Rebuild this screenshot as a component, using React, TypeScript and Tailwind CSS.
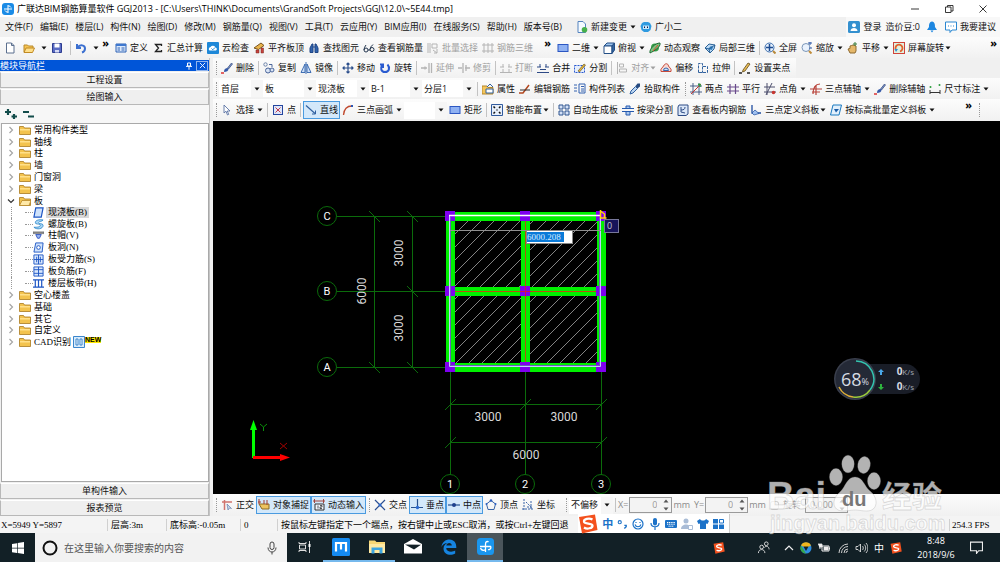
import type { ReactNode } from "react";
import { clsx } from "clsx";

/* 工具栏图标,统一 12x12 画布 */
const icons: Record<string, ReactNode> = {
  newFile: <path d="M2.500 1h5l2.500 2.500V11h-7.500zM7.500 1v2.500H10" fill="#fff" stroke="#5b6f8e" />,
  open: <><path d="M1 10V3h3.500l1 1H10v2" fill="#f6c453" stroke="#b98a2d" /><path d="M1 10.500 3 6h8.500L9.500 10.500z" fill="#ffdf8a" stroke="#c08a24" /></>,
  save: <><path d="M1.500 1.500h9v9h-9z" fill="#5a6cc4" stroke="#2d3c90" /><path d="M3.500 1.500h5v4h-5z" fill="#fff" /><path d="M4 8h4v2.500H4z" fill="#d5daf5" /></>,
  undo: <path d="M2 2v4h4M2.500 5.500C5 2 10 3 10 6.500 10 9 8.500 10 7 10.500" fill="none" stroke="#3b6fd0" strokeWidth="2" />,
  define: <><path d="M1 2h10v8H1z" fill="#dce9fb" stroke="#2f62b5" /><path d="M1 2h10v2H1z" fill="#3f78cf" /><path d="M2.500 6H5M6.500 6h3M2.500 8H5M6.500 8h3" stroke="#2f62b5" /></>,
  sum: <path d="M9.500 4V2.500h-6L6.500 6l-3 3.500h6V8" fill="none" stroke="#222" strokeWidth="1.300" />,
  cloud: <><rect width="12" height="12" rx="1" fill="#1e88d8" /><path d="M2.500 8.500a2 2 0 0 1 1-3.500 2.800 2.800 0 0 1 5 .5 1.600 1.600 0 0 1 .5 3z" fill="#fff" /><path d="m4.500 6.500 1.300 1.300L8 5.500" fill="none" stroke="#1e88d8" /></>,
  roof: <><path d="M1 6 8 1l3 2.500-5.500 4z" fill="#e9b44c" stroke="#7b5520" /><path d="M3 8v3h3V8zM8 6h2.500v5H8z" fill="#c7423d" stroke="#7b2a20" strokeWidth=".5" /></>,
  find: <path d="M2 10.500V6l2-4h1v8.500zM7 10.500V2h1l2 4v4.500zM5 5h2" fill="#3163ad" stroke="#1f4585" />,
  glasses: <path d="M1 8a2 2 0 0 0 4 0 2 2 0 0 0-4 0 8 8 0 0 1 2-5M7 7.500a2 2 0 0 0 4 0 2 2 0 0 0-4 0 8 8 0 0 1 3-5M5 8h2" fill="none" stroke="#24364f" />,
  batch: <path d="M1 1v10M3 1v10M5 2h5v4H5zM6 8l4 3M10 7v4H7" fill="none" stroke="#b4b4b4" />,
  rebar3d: <path d="M2 1v10M6 1v10M10 1v10M0 3h12M0 9h12" fill="none" stroke="#b4b4b4" />,
  view2d: <rect x="1" y="2.500" width="10" height="7" fill="#8fb1f2" stroke="#2b56c2" />,
  cube: <><path d="M1 4 4 1h7.500L9 4z" fill="#9ec5ee" stroke="#244f86" /><path d="M1 4h8v7.500H1z" fill="#fff" stroke="#244f86" /><path d="m9 4 2.500-3v7L9 11.500z" fill="#33659f" stroke="#244f86" /></>,
  orbit: <><circle cx="6" cy="5.500" r="4" fill="#35a047" /><path d="M1 11C0 7 6 1 11 1c1 4-6 8-10 10z" fill="#7ac37e" stroke="#1f6b35" /><path d="M4 9 9 3" stroke="#d94b31" /></>,
  local3d: <><path d="m1 6 4-4 6 1-1 4-4 4z" fill="#bcd9f4" stroke="#2a6297" /><path d="m4 7 3-3 2 1-1 3z" fill="#2f7fc0" /><path d="m1 6 4 1 1 4M5 7l6-4" fill="none" stroke="#2a6297" /></>,
  full: <><circle cx="5.500" cy="5.500" r="4.500" fill="#e4effc" stroke="#3e6fae" /><path d="M5.500 2v7M2 5.500h7" stroke="#1d4c91" strokeWidth="1.500" /><path d="m9 9 2.500 2.500" stroke="#b78a3b" strokeWidth="2" /></>,
  zoom: <><circle cx="5" cy="5.500" r="4" fill="#e9f2fd" stroke="#7c97b9" /><path d="M7 1h4M9 0v3M8 6h3" stroke="#2a57a5" /><path d="m8 9 2.500 2.500" stroke="#c08c3a" strokeWidth="2" /></>,
  pan: <><path d="M3 11 1 7l2-.5V4l1.500-.5L6 3l1.500.5L9 4v5l-1 2z" fill="#e5b86b" stroke="#8d6a31" /><path d="M8 0v4M6 2h4" stroke="#3b7d3a" /></>,
  rotateScreen: <><rect x=".5" y=".5" width="11" height="11" fill="#dff1df" stroke="#d0433a" /><path d="M3 8a3.500 3.500 0 1 1 4 1.500" fill="none" stroke="#e2622d" strokeWidth="1.800" /><path d="m1.500 7 3.500 0-2 3z" fill="#2e8fd6" /></>,
  brush: <><path d="m6.500 6 4-5 1 1-4 5z" fill="#7a93c7" stroke="#33497c" strokeWidth=".7" /><path d="M3 10c0-3 1.500-4 3.500-4l1 1c0 2-2 3-4.500 3z" fill="#3559a8" /><path d="M0 11h3" stroke="#d33" strokeWidth="1.500" /></>,
  copy: <><circle cx="2.500" cy="2.500" r="1.700" fill="none" stroke="#6c83aa" /><circle cx="5" cy="8.500" r="2.500" fill="#d9e4f5" stroke="#4a659a" /><circle cx="9" cy="8" r="2" fill="#d9e4f5" stroke="#4a659a" /><path d="M6 2.500h3V5" fill="none" stroke="#4a659a" /></>,
  mirror: <path d="M5 2v8.500H1zM7 2v8.500h4zM6 0v12" fill="#cfe0f7" stroke="#2f62ad" strokeWidth=".9" />,
  move: <path d="M6 1v10M1 6h10M4.500 2.500 6 1l1.500 1.500M4.500 9.500 6 11l1.500-1.500M2.500 4.500 1 6l1.500 1.500M9.500 4.500 11 6 9.500 7.500" fill="none" stroke="#2c4f8c" strokeWidth="1.200" />,
  rotate: <path d="M1 2.500h3V6M3.500 3C1 6 2 10 6 10s5.500-4 2.500-7.500" fill="none" stroke="#2a5bd0" strokeWidth="2" />,
  extend: <path d="M0 6h6M4 4.500V7.500M8 1v10M10.500 1v10" fill="none" stroke="#b4b4b4" strokeWidth="1.300" />,
  trim: <path d="M0 6h4M5 1v10M7 6h5M8 3v6" fill="none" stroke="#b4b4b4" strokeWidth="1.300" />,
  breakLine: <path d="M0 10.500h12M0 5h4M8 5h4M3 2v3M9 2v3M3 7v3M9 7v3" fill="none" stroke="#b4b4b4" />,
  join: <path d="M0 10.500h12M0 5h4M8 5h4M3 2v3M9 2v3M3 7.500h6" fill="none" stroke="#2d4a86" />,
  split: <><rect x=".5" y="3.500" width="10" height="7" fill="#e5eefc" stroke="#2b5bd0" strokeDasharray="2 1" /><path d="m4 9 6-7 1.500 1-6 7z" fill="#e8b93c" stroke="#5a4616" strokeWidth=".6" /></>,
  align: <path d="M1.500 0v12M3.500 2h4v3h-4zM3.500 7h7v3h-7z" fill="none" stroke="#b4b4b4" />,
  offset: <><path d="M1 9.500c-1-3 2-4 2.500-5.500C5 1 8 1 8.500 4c.5 1.500 3.500 2.500 2.500 5.500z" fill="#f7d9d4" stroke="#c64a3c" /><path d="M3.500 8.500a2.500 2.500 0 1 1 5 0z" fill="#d4e3f8" stroke="#3768ae" /></>,
  stretch: <path d="M1.500 10.500v-9h4v9zM6 4.500h4.500v6H2" fill="none" stroke="#33639f" strokeDasharray="3 1" />,
  grip: <><path d="m4 8 5-7 2 1-5 7-2.500 1z" fill="#e9bd57" stroke="#5e4818" strokeWidth=".8" /><path d="M0 11h3M8 11h3" stroke="#222" strokeWidth="1.500" /></>,
  property: <><path d="M0 3h5l1 1.500h5V11H0z" fill="#f5c65b" stroke="#b5862b" /><path d="M4 6h7v4H4z" fill="#fff" stroke="#33639f" /><path d="m5 4 3-3 3 3" fill="none" stroke="#33639f" /></>,
  editRebar: <><path d="M0 10h4l6-8" fill="none" stroke="#b3471f" strokeWidth="1.500" /><path d="M1 7h10" stroke="#333" /></>,
  list: <path d="M0 2h3M0 5h3M0 8h3M5 1h6v9H5zM7 3.500h3M7 6h3M7 8h3" fill="none" stroke="#3562b0" />,
  picker: <><path d="m1 11 1-3 4.500-4.500 2 2L4 10z" fill="#bcd6f2" stroke="#2f5f9f" /><path d="m6.500 3 2-2.500h2.500v3L8.500 5.500z" fill="#264a80" /></>,
  axis2: <><path d="M3 0v12M9 0v12M0 3h12M0 9h12" stroke="#39507d" strokeWidth=".9" /><path d="M1 11 11 1" stroke="#c7362f" /><path d="M8 1.500h2V4" fill="none" stroke="#2b9b3e" strokeWidth="1.500" /></>,
  parallel: <path d="M3 1v10M8.500 1v10M0 4h12M0 8h12" stroke="#6a4b8c" strokeWidth="1.200" />,
  axisAngle: <><path d="M3 0v12M0 4h11M0 9h12M8 0 2 12" stroke="#4d4f6d" /><circle cx="9.500" cy="9.500" r="1.800" fill="#c7362f" /></>,
  axis3: <path d="M0 6h12M6 2v10M10 1C6 1 3 4 3 11M2 9h8" fill="none" stroke="#b8433a" strokeWidth="1.200" />,
  dim: <><path d="M1 7v4M11 7v4M1 9.500h10" stroke="#333" /><circle cx="1.500" cy="4" r="1" fill="#2a9c3b" /><circle cx="10.500" cy="2" r="1" fill="#2a9c3b" /></>,
  pointer: <path d="M3 1v8l2-1.800L6.500 11l1.200-.6L6.300 7H9z" fill="#fff" stroke="#5b74a5" strokeWidth=".9" />,
  point: <><rect x="1.500" y="1.500" width="9" height="9" fill="#dfe7fa" stroke="#24459e" /><path d="m3.500 3.500 5 5M8.500 3.500l-5 5" stroke="#c03a4b" /></>,
  line: <><path d="m1 1.500 9 8" stroke="#2f5f9f" strokeWidth="1.200" /><path d="M10.500 6.500V10H7" fill="none" stroke="#2f5f9f" /></>,
  arc: <><path d="M1.500 11C2 5 5 2 10 2" fill="none" stroke="#c0492e" strokeWidth="1.300" /><path d="M9 1h2v2H9z" fill="#2b57b5" /></>,
  smart: <><path d="M.5 .5h11v11H.5z" fill="#e7effb" stroke="#315b9e" /><path d="m2.500 2.500 1.500 1.500M9.500 2.500 8 4M2.500 9.500 4 8M9.500 9.500 8 8M5.500 6h1" stroke="#111" strokeWidth="1.500" /></>,
  autoSlab: <path d="M1 1h4v4H1zM7 1h4v4H7zM1 7h4v4H1zM7 7h4v4H7z" fill="#d4e1f7" stroke="#2f558f" />,
  splitBeam: <path d="M0 4.500h12M0 7.500h12M4 2h4v2.500H4zM4 7.500h4V11H4z" fill="#a9c7ee" stroke="#2459ae" />,
  viewRebar: <><path d="M2 1h9v9l-2 1.500H1V3z" fill="#dbe7f8" stroke="#2e4c86" /><path d="M4 3v5l4 1M4 6c3 0 4-1 4-3" fill="none" stroke="#2e4c86" /></>,
  slope3: <><path d="M2 1v8h9" fill="none" stroke="#1f4da0" strokeWidth="1.300" /><path d="m2 9 3-3 4 3.500-5 1.500z" fill="#9fc0ee" stroke="#1f4da0" strokeWidth=".7" /></>,
  slopeBatch: <><path d="M3 1h8.500L9 11H.5z" fill="#e2f0fc" stroke="#1b7ac0" /><path d="M4 5h5l-3 3.500z" fill="#1b5ea8" /></>,
  ortho: <><path d="M1 3h10M3.500 1v10" stroke="#d0746e" strokeWidth="1.500" /><path d="m6 5 1 6 1.500-2 2 .5z" fill="#c5d4ea" stroke="#6680ab" strokeWidth=".7" /></>,
  osnap: <><path d="M1 5h10v5H4z" fill="#edc35f" stroke="#8d6a22" /><path d="M1 0v5M6 1v4M0 3h3M9 1v5" stroke="#a33b31" /></>,
  dyn: <><path d="M0 2h12M1.500 0v4M10.500 0v4" stroke="#a3443c" /><path d="M2 5h9v6H2z" fill="#eef3fb" stroke="#333" /><path d="M5 6.500v3M7 6.500h2V8H7v1.500h2" fill="none" stroke="#333" strokeWidth=".8" /></>,
  cross: <><path d="m1 1 10 10M11 1 1 11" stroke="#2b4f93" strokeWidth="1.200" /><circle cx="6" cy="6" r="1.500" fill="#2b6ad0" /></>,
  perp: <><path d="M0 8.500h12M6.500 0v8.500" stroke="#27518f" strokeWidth="1.200" /><circle cx="6.500" cy="8.500" r="1.700" fill="#2b6ad0" /></>,
  mid: <><path d="M0 6h12" stroke="#27518f" strokeWidth="1.200" /><circle cx="6" cy="6" r="2" fill="#1e3f8c" /></>,
  vertex: <><path d="m6 1.500 4.500 3.500L9 10.500H3L1.500 5z" fill="none" stroke="#3b65a8" /><circle cx="6" cy="1.500" r="1.300" fill="#2b5fc0" /><circle cx="1.500" cy="5" r="1" fill="#2b5fc0" /><circle cx="10.500" cy="5" r="1" fill="#2b5fc0" /></>,
  coord: <path d="M2 0v12M0 10h12M4 3l5 5M9 2v8M5 8h6" fill="none" stroke="#3b65a8" strokeDasharray="2 1" />,
  change: <><path d="M2 .5h5l2.500 2.500v8.500H2z" fill="#f4faff" stroke="#5583bf" /><circle cx="8.500" cy="8.800" r="2.800" fill="#47b04b" /></>,
  mascot: <><path d="M2 2 4 1h4l2 1 1.500 3-1 4L8 11H4L1.500 9l-1-4z" fill="#2f9ae0" /><path d="M3 4.500h6v3.500H3z" fill="#c7e8fb" /><path d="M4.500 5.500v1.500M7.500 5.500v1.500" stroke="#114" /></>,
  login: <><rect width="12" height="12" rx="1.500" fill="#3490cf" /><circle cx="6" cy="4.300" r="2" fill="#fff" /><path d="M2.500 10c0-4 7-4 7 0z" fill="#fff" /></>,
  bell: <><path d="M6 .5C3 1 3 4 3 6L1 9h10L9 6c0-2 0-5-3-5.500z" fill="#1c86e0" /><path d="M4.500 9.500h3L6 11.500z" fill="#1c86e0" /></>,
  feedback: <><path d="M.5 1h11v8H7l-2 2.500V9H.5z" fill="#fff" stroke="#2b87d1" /><path d="M3 5h1M5.500 5h1M8 5h1" stroke="#2b87d1" strokeWidth="1.200" /></>,
};

function Icon({ name }: { name: string }) {
  return (
    <svg viewBox="0 0 12 12" className="w-3 h-3 shrink-0" aria-hidden="true">
      {icons[name]}
    </svg>
  );
}

function Arrow() {
  return (
    <svg viewBox="0 0 6 4" className="w-[6px] h-1 shrink-0" aria-hidden="true">
      <path d="M.5 .5h5L3 3.500z" fill="currentColor" />
    </svg>
  );
}

interface ToolProps {
  icon?: string;
  label?: string;
  menu?: boolean;
  snug?: boolean;
  off?: boolean;
  active?: boolean;
}

function Tool({ icon, label, menu, snug, off, active }: ToolProps) {
  return (
    <button
      type="button"
      disabled={off}
      aria-label={label ?? icon}
      className={clsx(
        "flex items-center shrink-0 h-[18px] px-[2px] gap-[3px] whitespace-nowrap",
        off ? "text-[#a0a0a0]" : "text-[#111]",
        active && "bg-[#d3e8fa] ring-1 ring-inset ring-[#4a9be0]"
      )}
    >
      {icon && <Icon name={icon} />}
      <span className="flex items-center">
        {label}
        {menu && <span className={snug ? "pl-px" : "pl-[3px]"}><Arrow /></span>}
      </span>
    </button>
  );
}

const Sep = () => <span className="w-px h-[14px] mx-[2px] bg-[#c3c3c3] shrink-0" />;
const Grip = () => <span className="w-0 h-[14px] ml-[3px] mr-[2px] border-l border-dotted border-[#999] shrink-0" />;
const More = () => <span className="self-start text-[11px] leading-[12px] font-bold text-black">»</span>;

function Combo({ value, label, className }: { value: string; label: string; className: string }) {
  return (
    <span className={clsx("relative flex items-center shrink-0 h-[17px] bg-white", className)}>
      <select aria-label={label} defaultValue={value} className="appearance-none w-full h-full pl-[2px] bg-transparent outline-none">
        <option>{value}</option>
      </select>
      <span className="absolute right-0 inset-y-0 w-[12px] flex items-center justify-center bg-[#f6f6f6] pointer-events-none">
        <Arrow />
      </span>
    </span>
  );
}

function NumberBox({ label, value, unit }: { label: string; value: string; unit?: string }) {
  return (
    <label className="flex items-center gap-px text-[#8a8a8a] shrink-0">
      {label}
      <span className="flex items-center w-[43px] h-4 border border-[#9a9a9a] bg-[#f3f3f3] text-[#999]">
        <input className="w-full min-w-0 text-right bg-transparent outline-none pr-1" defaultValue={value} />
        <span className="flex flex-col gap-1 px-[2px] text-[#555]">
          <span className="rotate-180 flex"><Arrow /></span>
          <Arrow />
        </span>
      </span>
      {unit}
    </label>
  );
}

const menus = ["文件(F)", "编辑(E)", "楼层(L)", "构件(N)", "绘图(D)", "修改(M)", "钢筋量(Q)", "视图(V)", "工具(T)", "云应用(Y)", "BIM应用(I)", "在线服务(S)", "帮助(H)", "版本号(B)"];

interface TreeRow {
  name: string;
  open?: boolean;
  child?: string;
}

const tree: TreeRow[] = [
  { name: "常用构件类型" },
  { name: "轴线" },
  { name: "柱" },
  { name: "墙" },
  { name: "门窗洞" },
  { name: "梁" },
  { name: "板", open: true },
  { name: "现浇板(B)", child: "slab" },
  { name: "螺旋板(B)", child: "spiral" },
  { name: "柱帽(V)", child: "cap" },
  { name: "板洞(N)", child: "hole" },
  { name: "板受力筋(S)", child: "rebar" },
  { name: "板负筋(F)", child: "negative" },
  { name: "楼层板带(H)", child: "strip" },
  { name: "空心楼盖" },
  { name: "基础" },
  { name: "其它" },
  { name: "自定义" },
  { name: "CAD识别" },
];

const treeIcons: Record<string, ReactNode> = {
  slab: <path d="M3 1h8L9 11H1z" fill="#cfe2fb" stroke="#1d55c4" strokeWidth="1.300" />,
  spiral: <path d="M11 1C6 0 1 2 3 5c2 1 5 0 5 2S4 9 1 9c3 3 10 2 10-2 0-3-5-1-5-3 1-2 4-1 5-3z" fill="#a9d7f5" stroke="#1b7cc4" strokeWidth=".8" />,
  cap: <><path d="M0 2h12v2H0z" fill="#8c8c8c" stroke="#555" strokeWidth=".5" /><path d="M3 5h6L7 9H5z" fill="#9db8f0" stroke="#2a4fc0" /></>,
  hole: <><path d="M3 1h8l-1 10H1z" fill="#cfe2fb" stroke="#1d55c4" /><circle cx="6" cy="6" r="2" fill="#fff" stroke="#1d55c4" /></>,
  rebar: <path d="M1 1h10v10H1zM1 6h10M4 3v6M8 3v6M6 1v10" fill="#d9e8fd" stroke="#1d55c4" />,
  negative: <path d="M1 1h10v10H1zM1 4h10M1 8h10M6 1v10" fill="#d9e8fd" stroke="#1d55c4" />,
  strip: <path d="M0 2h12M0 10h12M2.500 2v8M6 2v8M9.500 2v8" fill="none" stroke="#1d55c4" strokeWidth="1.300" />,
};

function TreeItem({ row }: { row: TreeRow }) {
  if (row.child) {
    return (
      <li className="flex items-center pl-[9px]">
        <span className="w-[14px] h-full border-l border-dotted border-[#999]" />
        <span className="w-2 border-t border-dotted border-[#999]" />
        <svg viewBox="0 0 12 12" className="w-[11px] h-[11px] mr-[2px]" aria-hidden="true">{treeIcons[row.child]}</svg>
        <span className={clsx("px-[2px] leading-[11px]", row.child === "slab" && "bg-[#d9d9d9]")}>{row.name}</span>
      </li>
    );
  }
  return (
    <li className="flex items-center pl-[5px]">
      <svg viewBox="0 0 8 8" className="w-2 h-2 mr-1" aria-hidden="true">
        <path d={row.open ? "m1 2.500 3 3 3-3" : "m2.500 1 3 3-3 3"} fill="none" stroke={row.open ? "#333" : "#a5a5a5"} strokeWidth="1.200" />
      </svg>
      <svg viewBox="0 0 12 10" className="w-3 h-[10px] mr-[3px]" aria-hidden="true">
        <path d="M.5 9.500V1.500h4l1 1.500h6v6.500z" fill="#f3c34e" stroke="#a87a20" strokeWidth=".8" />
        {row.open ? (
          <path d="m.5 9.500 2.500-5h9l-2 5z" fill="#ffe9a8" stroke="#b8892b" strokeWidth=".8" />
        ) : (
          <path d="M1 4h10v1.500H1z" fill="#ffe08a" />
        )}
      </svg>
      {row.name}
      {row.name === "CAD识别" && (
        <>
          <svg viewBox="0 0 12 12" className="w-3 h-3 ml-[2px]" aria-hidden="true">
            <path d="M.5 .5h11v11H.5z" fill="#d7ebfc" stroke="#3b86cc" />
            <path d="M3 3h2v6H3zM7 3h2v6H7z" fill="#fff" stroke="#3b86cc" />
          </svg>
          <span className="bg-[#ffe800] font-bold font-['Liberation_Sans',sans-serif] text-[7px] leading-[6px] mb-[5px]">NEW</span>
        </>
      )}
    </li>
  );
}

function SidePanel() {
  const bar = "h-4 mt-px shrink-0 border border-[#b8b8b8] border-t-white bg-[#efefef] text-center leading-[14px]";
  return (
    <aside className="w-[210px] mr-[3px] shrink-0 flex flex-col bg-[#f0f0f0] border-r border-[#c4c4c4] pt-[2px]">
      <div className="h-[11px] shrink-0 flex items-center bg-[#0055d8] text-white">
        模块导航栏
        <svg viewBox="0 0 8 10" className="w-[6px] h-2 ml-auto mr-1" aria-hidden="true">
          <path d="M2 1h4v4H2zM0 5.500h8M4 5.500V10" fill="none" stroke="#fff" strokeWidth="1.300" />
        </svg>
        <button type="button" aria-label="关闭" className="w-3 h-[10px] mr-px border border-[#8fb4ee] flex items-center justify-center">
          <svg viewBox="0 0 8 8" className="w-[7px] h-[7px]"><path d="m1 1 6 6M7 1 1 7" stroke="#fff" /></svg>
        </button>
      </div>
      <button type="button" className={bar}>工程设置</button>
      <button type="button" className={bar}>绘图输入</button>
      <div className="h-[18px] shrink-0 flex items-center pl-1 gap-1 bg-[#f7f7f7]">
        <svg viewBox="0 0 14 12" className="w-[14px] h-3" aria-hidden="true">
          <path d="M4 1v6M1 4h6M10 6v5M7.500 8.500h5.500" stroke="#134d4b" strokeWidth="2.200" />
        </svg>
        <svg viewBox="0 0 14 12" className="w-[14px] h-3" aria-hidden="true">
          <path d="M1 4h6M6 8.500h6" stroke="#134d4b" strokeWidth="2" />
        </svg>
      </div>
      <div className="flex-1 min-h-0 bg-white border border-[#a9a9a9] ml-px">
        <ul className="grid auto-rows-fr h-[224px] font-['Liberation_Serif','Noto_Sans_CJK_SC',serif] text-black">
          {tree.map((row) => (
            <TreeItem key={row.name} row={row} />
          ))}
        </ul>
      </div>
      <button type="button" className={bar}>单构件输入</button>
      <button type="button" className={bar}>报表预览</button>
    </aside>
  );
}

const xs = [450, 525, 601];
const ys = [216, 291, 367];

function Drawing() {
  return (
    <svg viewBox="213 121 787 373" className="w-full h-full" role="img" aria-label="板绘图区">
      <defs>
        <pattern id="hatch" width="13" height="13" patternUnits="userSpaceOnUse">
          <path d="M-1 14 14 -1" stroke="#a4a4a4" strokeWidth=".8" />
        </pattern>
      </defs>
      <rect x="452" y="218" width="147" height="147" fill="url(#hatch)" />

      {/* 轴网 */}
      <g stroke="#0b6b0b" fill="none" shapeRendering="crispEdges">
        {ys.map((y) => (
          <path key={y} d={`M337 ${y}.5H450`} />
        ))}
        {xs.map((x) => (
          <path key={x} d={`M${x}.5 371V475`} />
        ))}
        <path d="M374.500 216V367M412.500 216V367M450 404.500H601M450 442.500H601" />
      </g>
      <g stroke="#0b6b0b" fill="none">
        {[[374, 216], [374, 367], [412, 216], [412, 291], [412, 367]].map(([x, y]) => (
          <path key={`${x}-${y}`} d={`m${x - 5} ${y - 5} 11 11`} />
        ))}
        {[[450, 404], [525, 404], [601, 404], [450, 442], [601, 442]].map(([x, y]) => (
          <path key={`${x}-${y}`} d={`m${x - 5} ${y + 6} 11 -11`} />
        ))}
        {ys.map((y) => (
          <circle key={y} cx="327" cy={y} r="9.500" />
        ))}
        {xs.map((x) => (
          <circle key={x} cx={x} cy="484" r="9.500" />
        ))}
      </g>

      {/* 梁与柱 */}
      <g fill="#00f000" shapeRendering="crispEdges">
        {ys.map((y) => (
          <rect key={y} x="446" y={y - 4} width="159" height="9" />
        ))}
        {xs.map((x) => (
          <rect key={x} x={x - 4} y="212" width="9" height="159" />
        ))}
      </g>
      <path d="M450 291.500H601M525.500 216V367" stroke="#b8500c" fill="none" shapeRendering="crispEdges" />
      <g fill="#7f00f0" shapeRendering="crispEdges">
        {xs.map((x) => ys.map((y) => <rect key={`${x}-${y}`} x={x - 5} y={y - 5} width="10" height="10" />))}
      </g>
      <path d="M520 291.500h11M525.500 286v11" stroke="#d01050" shapeRendering="crispEdges" />
      <path d="M450.500 217V365.500H599.500V218" stroke="#6a5fb8" fill="none" />
      <path d="M449.500 215.500V366.500H600.500V215.500" stroke="#c3ccff" fill="none" />
      <path d="M449 215.500H601" stroke="#fff" strokeWidth="1.500" />
      <path d="M450 230.500H601" stroke="#8f8f8f" />
      <path d="M600.500 210v8h6M600.500 211l4 3v4" stroke="#ffd800" strokeWidth="1.500" fill="none" />

      <g fill="#d8d8d8" fontFamily="Roboto, sans-serif" textAnchor="middle">
        <g fontSize="12">
          <text x="488" y="421">3000</text>
          <text x="564" y="421">3000</text>
          <text x="526" y="459">6000</text>
          <text transform="translate(403 253) rotate(-90)">3000</text>
          <text transform="translate(403 328) rotate(-90)">3000</text>
          <text transform="translate(366 291) rotate(-90)">6000</text>
        </g>
        <g fontSize="11" fill="#fff">
          <text x="327" y="220">C</text>
          <text x="327" y="295">B</text>
          <text x="327" y="371">A</text>
          <text x="450" y="488">1</text>
          <text x="525" y="488">2</text>
          <text x="601" y="488">3</text>
        </g>
      </g>

      {/* 坐标系 */}
      <path d="M253.500 458V428" stroke="#0f0" strokeWidth="3" />
      <path d="m250 430 3.500-10 3.500 10z" fill="#0f0" />
      <path d="M253 457.500H282" stroke="#f00" strokeWidth="3" />
      <path d="m280 454 10 3.500-10 3.500z" fill="#f00" />
      <path d="m260 424 3.500 3 3.500-3M263.500 427v4" stroke="#0a900a" fill="none" />
      <path d="m280 443 7 6M287 443l-7 6" stroke="#a00000" />
    </svg>
  );
}

function SpeedBall() {
  return (
    <div className="absolute left-[621px] top-[237px] w-[86px] h-[42px] text-[#d5dae2]">
      <div className="absolute left-5 top-[6px] right-0 h-[30px] rounded-r-full bg-[#191d27] pl-[24px] pr-[6px] flex flex-col justify-between text-[9px] leading-[15px]">
        {["#4aa8e8", "#2eb43e"].map((color, i) => (
          <div key={color} className="flex items-center justify-between">
            <svg viewBox="0 0 6 6" className="w-[6px] h-[6px]" aria-hidden="true">
              <path d={i === 0 ? "M3 0 6 3H4v3H2V3H0z" : "M3 6 0 3h2V0h2v3h2z"} fill={color} />
            </svg>
            <span><b className="text-[10px]">0</b><span className="text-[8px] text-[#a0a6b0]">K/s</span></span>
          </div>
        ))}
      </div>
      <svg viewBox="0 0 42 42" className="absolute left-0 top-0 w-[42px] h-[42px]" aria-hidden="true">
        <circle cx="21" cy="21" r="21" fill="#3a3f4d" />
        <circle cx="21" cy="21" r="19.500" fill="#242936" />
        <path d="M22 3a18 18 0 0 1 14 29" fill="none" stroke="#34c4b0" strokeWidth="1.500" />
        <path d="M36 32A18 18 0 0 1 19 39" fill="none" stroke="#9ccc3c" strokeWidth="1.500" />
        <path d="M19 39A18 18 0 0 1 5 29" fill="none" stroke="#e0b038" strokeWidth="1.500" />
      </svg>
      <span className="absolute left-0 top-0 w-[42px] h-[42px] flex items-center justify-center text-[18px] font-['Open_Sans',sans-serif]">
        68<span className="text-[9px] pt-[5px]">%</span>
      </span>
    </div>
  );
}

function Sogou({ className }: { className: string }) {
  return (
    <svg viewBox="0 0 20 20" className={className} aria-hidden="true">
      <path d="m1 3 16-2.500 2.500 15.500L4 19.500z" fill="#f4511e" />
      <path d="M14.500 5.500C11 3.500 5.500 5 6 7.800c.5 2.700 8 1 8.500 3.700.3 2.800-5.500 4-8.500 2" fill="none" stroke="#fff" strokeWidth="2.200" />
    </svg>
  );
}

function ImeBar() {
  return (
    <div className="absolute left-[578px] -top-[2px] h-[19px] w-[152px] flex items-center justify-between pr-1 bg-white border-r border-[#ccc] text-[#1c72c8]">
      <Sogou className="w-5 h-5" />
      <b className="text-[11px]">中</b>
      <svg viewBox="0 0 12 12" className="w-[11px] h-3"><circle cx="3" cy="4" r="1.700" fill="none" stroke="currentColor" strokeWidth="1.200" /><path d="M8 7.500h2V9l-2 2" fill="none" stroke="currentColor" strokeWidth="1.500" /></svg>
      <svg viewBox="0 0 12 12" className="w-3 h-3"><circle cx="6" cy="6" r="5" fill="none" stroke="currentColor" strokeWidth="1.200" /><path d="M3 6.500c1 3 5 3 6 0M4 4v1M8 4v1" fill="none" stroke="currentColor" strokeWidth="1.200" /></svg>
      <svg viewBox="0 0 12 12" className="w-3 h-3"><rect x="4" y="0" width="4" height="7.500" rx="2" fill="currentColor" /><path d="M2 5c0 5 8 5 8 0M6 9v3" fill="none" stroke="currentColor" strokeWidth="1.200" /></svg>
      <svg viewBox="0 0 12 12" className="w-3 h-3"><rect y="2" width="12" height="8" rx="1" fill="currentColor" /><path d="M2 4.500h8M2 6.200h8M3.500 8.200h5" stroke="#fff" strokeDasharray="1.200 .6" /></svg>
      <svg viewBox="0 0 12 12" className="w-3 h-3 text-[#a9bcd6]"><circle cx="5" cy="3" r="2.500" fill="currentColor" /><path d="M0 11c0-6 10-6 10 0z" fill="currentColor" /><path d="M7.500 7.500h4v4h-4z" fill="#fff" stroke="currentColor" /></svg>
      <svg viewBox="0 0 12 12" className="w-3 h-3"><path d="m0 3 3-2c1 2 5 2 6 0l3 2-1.500 3L9 5.500V11H3V5.500L1.500 6z" fill="currentColor" /></svg>
      <svg viewBox="0 0 12 12" className="w-3 h-3"><path d="M0 1h5v4.500H0zM0 6.500h5V11H0zM6 6.500h5V11H6z" fill="currentColor" /><path d="M6.500 1.500h4v3.500h-4z" fill="none" stroke="currentColor" /></svg>
    </div>
  );
}

function Watermark() {
  return (
    <svg viewBox="0 0 184 92" className="absolute right-[50px] bottom-[20px] w-[184px] h-[92px] pointer-events-none" aria-hidden="true">
      <g fill="#fff" fillOpacity=".7" stroke="#999" strokeOpacity=".35" strokeWidth=".8" fontFamily="'Liberation Sans', 'Noto Sans CJK SC', sans-serif">
        <ellipse cx="70" cy="27" rx="6.500" ry="8.500" />
        <ellipse cx="82" cy="14" rx="6.200" ry="8.800" />
        <ellipse cx="98" cy="15" rx="6.200" ry="8.500" transform="rotate(10 98 15)" />
        <ellipse cx="108" cy="31" rx="6.500" ry="8.500" />
        <path d="M89 27c8 0 9 9 15 14 9 7 8 20-3 20-6 0-8-1-12-1s-7 1-12 1c-11 0-12-12-3-19 6-6 7-15 15-15z" />
        <text x="1" y="59" fontSize="38" fontWeight="700">Bai</text>
        <text x="116" y="57" fontSize="30" fontWeight="700">经验</text>
        <text x="4" y="80" fontSize="20" fontWeight="700">jingyan.baidu.com</text>
      </g>
      <text x="76" y="56" fontSize="20" fontWeight="700" fill="#777" fontFamily="'Liberation Sans', sans-serif">du</text>
    </svg>
  );
}

function TitleBar() {
  return (
    <header className="h-[17px] shrink-0 flex items-center bg-white text-black">
      <svg viewBox="0 0 12 12" className="w-3 h-3 ml-[2px] mr-[3px]" aria-hidden="true">
        <rect width="12" height="12" rx="3" fill="#1a8be6" />
        <path d="M6 2v8M2 6h8M3 7.500C4 9.500 6 9 6 9M9 4.500C8 2.500 6 3 6 3" fill="none" stroke="#fff" />
      </svg>
      <h1>广联达BIM钢筋算量软件 GGJ2013 - [C:\Users\THINK\Documents\GrandSoft Projects\GGJ\12.0\~5E44.tmp]</h1>
      <div className="ml-auto flex">
        {[
          ["最小化", "M1 5h8"],
          ["还原", "M1.500 3h5.500v5.500H1.500zM3.500 3V1.500H9V7H7"],
          ["关闭", "m1.500 1.500 7 7M8.500 1.500l-7 7"],
        ].map(([label, d]) => (
          <button key={label} type="button" aria-label={label} className="w-[34px] h-[17px] flex items-center justify-center">
            <svg viewBox="0 0 10 10" className="w-[10px] h-[10px]"><path d={d} fill="none" stroke="#222" strokeWidth=".9" /></svg>
          </button>
        ))}
      </div>
    </header>
  );
}

function Taskbar() {
  const app = "w-9 h-full flex items-center justify-center border-b-2";
  return (
    <footer className="h-[29px] shrink-0 flex items-center bg-[#122026] text-white">
      <button type="button" aria-label="开始" className="w-[35px] h-full flex items-center justify-center">
        <svg viewBox="0 0 12 12" className="w-3 h-3"><path d="m0 2 5-.8v4.500H0zM5.700 1 12 0v5.700H5.700zM0 6.400h5v4.500l-5-.7zM5.700 6.400H12V12l-6.300-1z" fill="#fff" /></svg>
      </button>
      <label className="w-[252px] h-full flex items-center bg-[#f2f2f2] pl-[7px] pr-[10px]">
        <svg viewBox="0 0 16 16" className="w-4 h-4 mr-[6px]" aria-hidden="true"><circle cx="8" cy="8" r="6.500" fill="none" stroke="#111" strokeWidth="2" /></svg>
        <input aria-label="搜索" placeholder="在这里输入你要搜索的内容" className="flex-1 min-w-0 bg-transparent outline-none text-[10px] placeholder:text-[#555]" />
        <svg viewBox="0 0 10 14" className="w-[10px] h-[14px]" aria-hidden="true"><rect x="3" y="1" width="4" height="7.500" rx="2" fill="none" stroke="#444" /><path d="M1 6.500c0 6 8 6 8 0M5 11v2.500" fill="none" stroke="#444" /></svg>
      </label>
      <button type="button" aria-label="任务视图" className={clsx(app, "border-transparent")}>
        <svg viewBox="0 0 14 12" className="w-[14px] h-3"><path d="M1.500 4h6v4h-6zM1 1v1.500h7V1M1 11V9.500h7V11M11.500 0v12" fill="none" stroke="#ddd" /><path d="M10.500 3h2v3h-2z" fill="#fff" /></svg>
      </button>
      <button type="button" aria-label="傲游" className={clsx(app, "border-[#76b9ed]")}>
        <svg viewBox="0 0 18 18" className="w-[18px] h-[18px]"><rect width="18" height="18" rx="1.500" fill="#158af0" /><path d="M4 13.500V5h10v8.500M9 5v6.500" fill="none" stroke="#fff" strokeWidth="2.200" /></svg>
      </button>
      <button type="button" aria-label="文件资源管理器" className={clsx(app, "border-[#76b9ed]")}>
        <svg viewBox="0 0 16 16" className="w-4 h-4"><path d="M0 1.500h6L7.500 3H16v11H0z" fill="#f8d775" /><path d="M0 5h16v9H0z" fill="#ffe9a2" /><path d="M2.500 14.500V8.500h11v6h-3V11h-5v3.500z" fill="#3da5e0" /></svg>
      </button>
      <button type="button" aria-label="邮件" className={clsx(app, "border-transparent")}>
        <svg viewBox="0 0 18 15" className="w-[18px] h-[15px]"><path d="M0 5 9 0l9 5v9.500H0z" fill="#fff" /><path d="m1 5.500 16 .2-7 4.800z" fill="#122026" /></svg>
      </button>
      <button type="button" aria-label="Edge" className={clsx(app, "border-transparent")}>
        <svg viewBox="0 0 16 16" className="w-4 h-4"><path d="M.5 8C1 3 4.500.5 8.500.5c5 0 7 4 6.800 8.500H5.200c.2 4 6 4.500 9 2.500v3C10 17 2.500 16 2.500 9.500c0-3 2-4.500 4-5.500C4 4 1.500 5.500.5 8zm4.800-1.500h5.500c0-3.500-5-3.500-5.500 0z" fill="#1684e0" /></svg>
      </button>
      <button type="button" aria-label="广联达" className={clsx(app, "border-[#76b9ed] bg-[#4a555b]")}>
        <svg viewBox="0 0 17 17" className="w-[17px] h-[17px]"><rect width="17" height="17" rx="3.500" fill="#1a96ee" /><path d="M8.500 14V6c0-2.500 2-3 3-2M3 8.500h11M3.500 10c1 3 4 2.500 5 1.500M14 8.500c0 3-2 3.500-3 3" fill="none" stroke="#fff" strokeWidth="1.300" /></svg>
      </button>
      <div className="ml-auto flex items-center gap-[6px] text-[10px]">
        <Sogou className="w-3 h-3 mr-[26px]" />
        <svg viewBox="0 0 14 14" className="w-[13px] h-[13px] mr-2" aria-hidden="true"><circle cx="5" cy="6.500" r="2" fill="none" stroke="#ddd" /><circle cx="10" cy="3" r="2" fill="none" stroke="#ddd" /><path d="M1.500 13c0-5 7-5 7 0M8 7c2-2.500 5-1 5 2" fill="none" stroke="#ddd" /></svg>
        <svg viewBox="0 0 10 10" className="w-[10px] h-[10px]" aria-hidden="true"><path d="m1 7 4-4 4 4" fill="none" stroke="#eee" strokeWidth="1.200" /></svg>
        <svg viewBox="0 0 12 12" className="w-3 h-3" aria-hidden="true"><circle cx="6" cy="6" r="5.500" fill="#2f8ee0" /><path d="M1 3.500A5.500 5.500 0 0 1 11 3.500L6 6z" fill="#f0b41e" /><path d="M1 3.500 6 11.500A5.500 5.500 0 0 1 1 3.500z" fill="#37a84a" /><path d="M3.500 4.500h5L6 9z" fill="#122026" /></svg>
        <svg viewBox="0 0 13 10" className="w-[13px] h-[10px]" aria-hidden="true"><path d="M4 3h7v5H4zM11.500 4.500v2" fill="none" stroke="#eee" /><path d="M6 4h4v3H6zM0 1h4v3H2v2" fill="#eee" stroke="#eee" strokeWidth=".8" /></svg>
        <svg viewBox="0 0 12 12" className="w-3 h-3" aria-hidden="true"><path d="M2 11A9 9 0 0 1 11 2M4.500 11A6.500 6.500 0 0 1 11 4.500M7 11a4 4 0 0 1 4-4M9 11a2 2 0 0 1 2-2" fill="none" stroke="#ccc" /></svg>
        <svg viewBox="0 0 13 12" className="w-[13px] h-3" aria-hidden="true"><path d="M1 4.500h2L5.500 2v8L3 7.500H1zM7.500 4c1 1 1 3 0 4M9.200 2.500c2 2 2 5 0 7M11 1c2.500 3 2.500 7 0 10" fill="none" stroke="#ddd" strokeWidth=".9" /></svg>
        <span>中</span>
        <Sogou className="w-3 h-3" />
        <div className="w-14 text-center text-[9px] leading-[14px]">
          <div>8:48</div>
          <div>2018/9/6</div>
        </div>
        <svg viewBox="0 0 12 12" className="w-[13px] h-[13px] mr-[17px]" aria-hidden="true"><path d="M.5 1h11v8H8l-2 2.500V9H.5z" fill="none" stroke="#eee" /></svg>
      </div>
    </footer>
  );
}

export default function App() {
  const row = "flex items-center shrink-0 bg-linear-to-b from-[#fcfcfc] to-[#f1f1f1]";
  return (
    <div className="relative h-screen flex flex-col overflow-hidden bg-[#f0f0f0] text-[9px] leading-[12px] text-[#111] font-['Open_Sans','Noto_Sans_CJK_SC',sans-serif]">
      <TitleBar />

      <nav className="h-5 shrink-0 flex items-center bg-[#f0f0f0] pl-[5px]">
        <div className="flex gap-[7px] whitespace-nowrap w-[569px]">
          {menus.map((m) => (
            <button key={m} type="button">{m}</button>
          ))}
        </div>
        <Tool icon="change" label="新建变更" menu />
        <Tool icon="mascot" label="广小二" />
        <div className="ml-auto h-full flex items-center bg-[#f8f8f8] pr-[2px]">
          <Tool icon="login" label="登录" />
          <button type="button" className="px-[2px] mr-[2px] whitespace-nowrap">造价豆:0</button>
          <Tool icon="bell" />
          <Tool icon="feedback" label="我要建议" />
        </div>
      </nav>

      <div className={clsx(row, "h-[21px] pl-[2px]")}>
        <div className="h-full flex items-center w-[111px]">
          <Tool icon="newFile" />
          <Tool icon="open" menu />
          <Tool icon="save" />
          <Sep />
          <Tool icon="undo" menu />
          <span className="ml-auto mr-1 h-full"><More /></span>
        </div>
        <div className="h-full flex items-center w-[442px]">
          <Tool icon="define" label="定义" />
          <Tool icon="sum" label="汇总计算" />
          <Tool icon="cloud" label="云检查" />
          <Tool icon="roof" label="平齐板顶" />
          <Tool icon="find" label="查找图元" />
          <Tool icon="glasses" label="查看钢筋量" />
          <Tool icon="batch" label="批量选择" off />
          <Tool icon="rebar3d" label="钢筋三维" off />
          <span className="ml-auto mr-1 h-full"><More /></span>
        </div>
        <Tool icon="view2d" label="二维" menu />
        <Tool icon="cube" label="俯视" menu />
        <Tool icon="orbit" label="动态观察" />
        <Tool icon="local3d" label="局部三维" />
        <Sep />
        <Tool icon="full" label="全屏" />
        <Tool icon="zoom" label="缩放" menu />
        <Tool icon="pan" label="平移" menu />
        <Tool icon="rotateScreen" label="屏幕旋转" menu snug />
        <span className="ml-auto mr-[3px] h-full"><More /></span>
      </div>

      <main className="flex-1 min-h-0 flex">
        <SidePanel />
        <section className="flex-1 min-w-0 flex flex-col">
          <div className={clsx(row, "h-5 self-start pr-1")}>
            <Grip />
            <Tool icon="brush" label="删除" />
            <Sep />
            <Tool icon="copy" label="复制" />
            <Tool icon="mirror" label="镜像" />
            <Sep />
            <Tool icon="move" label="移动" />
            <Tool icon="rotate" label="旋转" />
            <Sep />
            <Tool icon="extend" label="延伸" off />
            <Tool icon="trim" label="修剪" off />
            <Sep />
            <Tool icon="breakLine" label="打断" off />
            <Tool icon="join" label="合并" />
            <Tool icon="split" label="分割" />
            <Sep />
            <Tool icon="align" label="对齐" off menu snug />
            <Tool icon="offset" label="偏移" />
            <Tool icon="stretch" label="拉伸" />
            <Sep />
            <Tool icon="grip" label="设置夹点" />
          </div>

          <div className={clsx(row, "h-[21px]")}>
            <Grip />
            <Combo label="楼层" value="首层" className="w-11" />
            <Combo label="构件大类" value="板" className="w-[53px]" />
            <Combo label="构件类型" value="现浇板" className="w-[53px]" />
            <Combo label="构件" value="B-1" className="w-[53px]" />
            <Combo label="分层" value="分层1" className="w-[53px]" />
            <Sep />
            <Tool icon="property" label="属性" />
            <Tool icon="editRebar" label="编辑钢筋" />
            <Tool icon="list" label="构件列表" />
            <Tool icon="picker" label="拾取构件" />
            <Grip />
            <Tool icon="axis2" label="两点" />
            <Tool icon="parallel" label="平行" />
            <Tool icon="axisAngle" label="点角" menu />
            <Tool icon="axis3" label="三点辅轴" menu />
            <Tool icon="brush" label="删除辅轴" />
            <Tool icon="dim" label="尺寸标注" menu />
          </div>

          <div className={clsx(row, "h-[22px]")}>
            <Grip />
            <Tool icon="pointer" label="选择" menu />
            <Sep />
            <Tool icon="point" label="点" />
            <Sep />
            <Tool icon="line" label="直线" active />
            <Tool icon="arc" label="三点画弧" menu />
            <Combo label="弧参数" value="" className="w-[43px]" />
            <Tool icon="view2d" label="矩形" />
            <Sep />
            <Tool icon="smart" label="智能布置" menu snug />
            <Sep />
            <Tool icon="autoSlab" label="自动生成板" />
            <Tool icon="splitBeam" label="按梁分割" />
            <Tool icon="viewRebar" label="查看板内钢筋" />
            <Tool icon="slope3" label="三点定义斜板" menu snug />
            <Tool icon="slopeBatch" label="按标高批量定义斜板" menu />
            <span className="ml-auto mr-1 h-full"><More /></span>
            <span className="w-6 flex"><Grip /></span>
          </div>

          <div className="relative flex-1 min-h-0 bg-black">
            <Drawing />
            <span className="absolute left-[391px] top-[98px] w-[15px] h-[14px] pl-[2px] bg-[#17145a] border border-[#77779a] text-[#c5c5d8]">0</span>
            <span className="absolute left-[313px] top-[109px] w-[47px] h-[14px] bg-white border border-[#888] flex items-center">
              <input
                aria-label="长度"
                defaultValue="6000.208"
                className="w-[37px] h-[10px] bg-[#0a7ad8] text-[#d8ecff] outline-none font-['Liberation_Serif',serif]"
              />
            </span>
            <SpeedBall />
          </div>

          <div className={clsx(row, "h-[22px]")}>
            <Grip />
            <Tool icon="ortho" label="正交" />
            <Tool icon="osnap" label="对象捕捉" active />
            <Tool icon="dyn" label="动态输入" active />
            <div className="flex items-center w-[197px]">
              <Grip />
              <Tool icon="cross" label="交点" />
              <Tool icon="perp" label="垂点" active />
              <Tool icon="mid" label="中点" active />
              <Tool icon="vertex" label="顶点" />
              <Tool icon="coord" label="坐标" />
            </div>
            <Grip />
            <Combo label="偏移方式" value="不偏移" className="w-11" />
            <Sep />
            <div className="flex items-center gap-1">
              <NumberBox label="X=" value="0" unit="mm" />
              <NumberBox label="Y=" value="0" unit="mm" />
              <label className="flex items-center gap-1 text-[#999]">
                <input type="checkbox" disabled className="w-[9px] h-[9px]" />
                旋转
              </label>
              <NumberBox label="" value="0.000" />
            </div>
          </div>
        </section>
      </main>

      <div className="relative h-[17px] shrink-0 flex items-center gap-px bg-[#f4f4f4] text-black font-['Liberation_Serif','Noto_Sans_CJK_SC',serif] whitespace-nowrap">
        <span className="w-[108px] pl-px border-r border-[#d0d0d0]">X=5949 Y=5897</span>
        <span className="w-[58px] pl-[2px] border-r border-[#d0d0d0]">层高:3m</span>
        <span className="w-[73px] pl-[2px] border-r border-[#d0d0d0]">底标高:-0.05m</span>
        <span className="w-9 pl-[2px] border-r border-[#d0d0d0]">0</span>
        <span className="flex-1 pl-[2px]">按鼠标左键指定下一个端点，按右键中止或ESC取消，或按Ctrl+左键回退</span>
        <span className="w-[51px] pl-[2px] border-l border-[#d0d0d0]">254.3 FPS</span>
        <ImeBar />
      </div>

      <Taskbar />
      <Watermark />
    </div>
  );
}
